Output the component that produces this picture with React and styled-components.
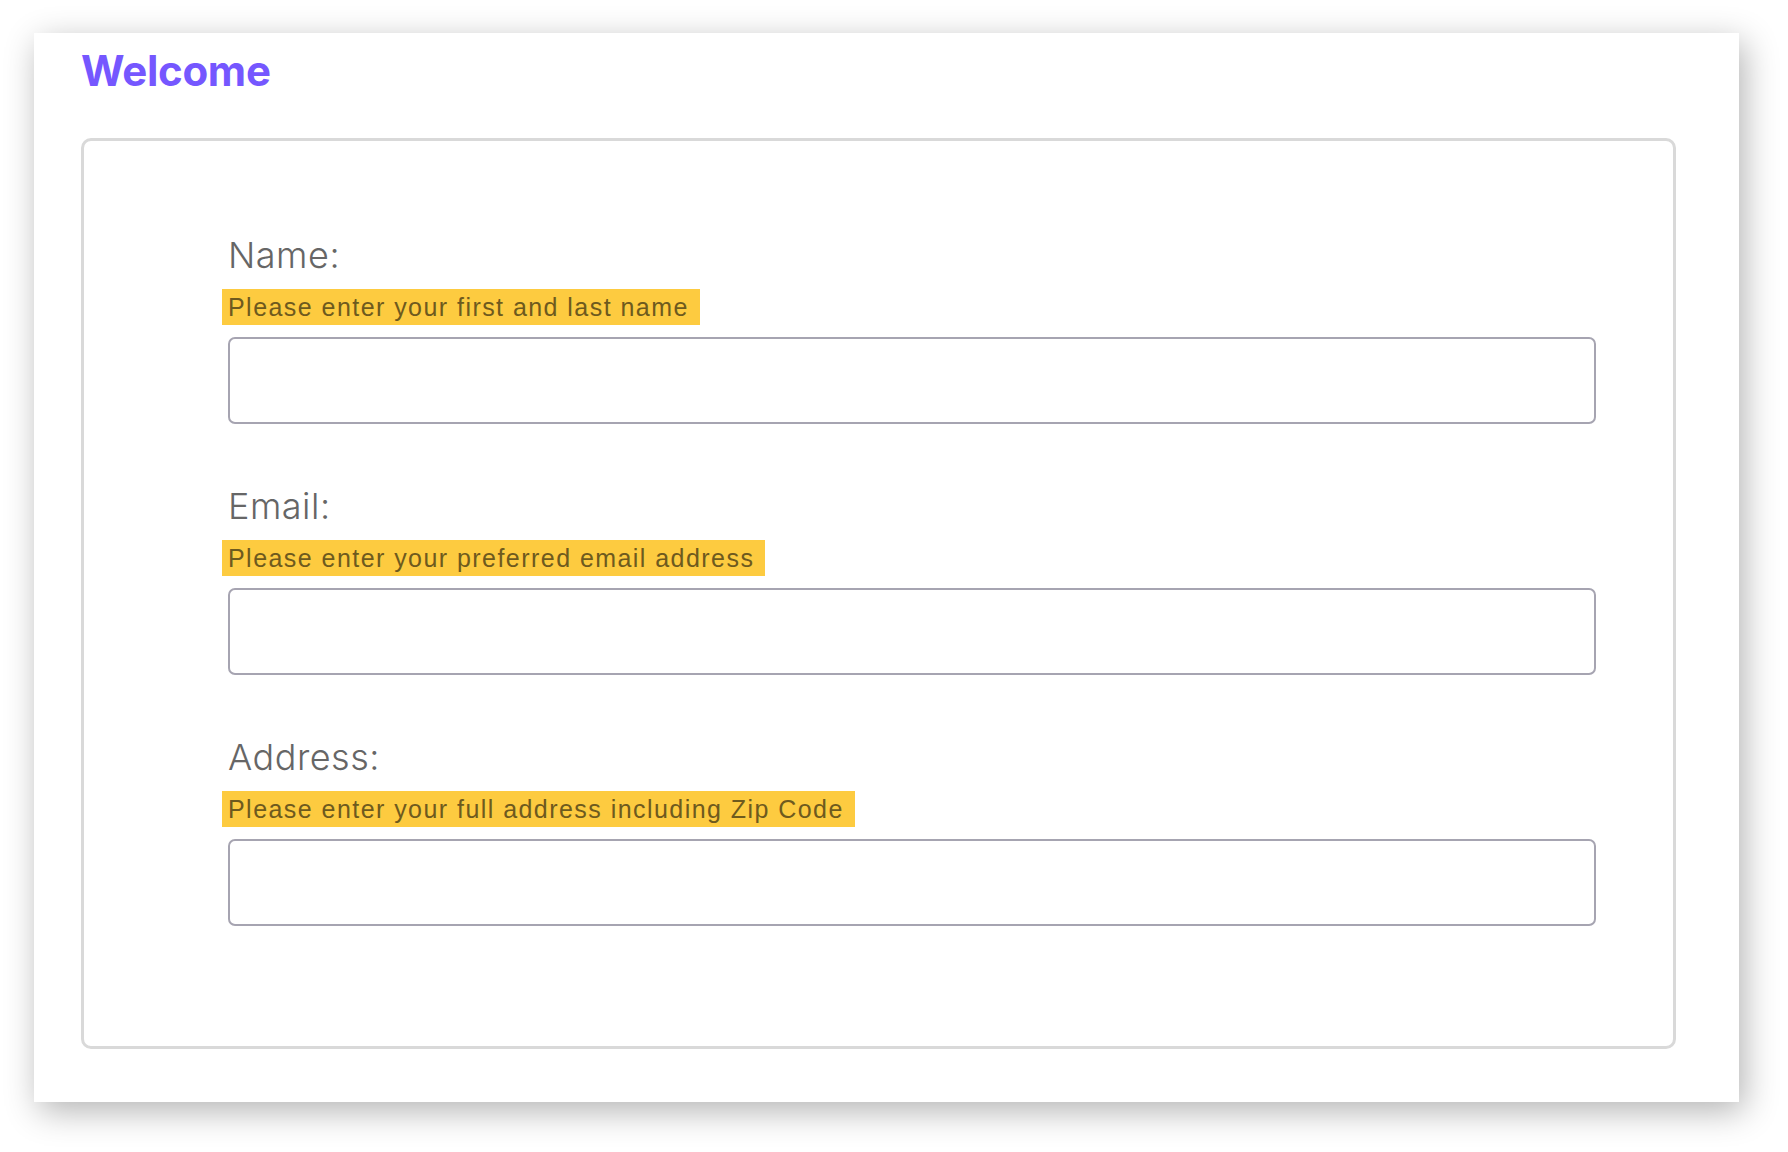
import React from "react"
import styled, { createGlobalStyle } from "styled-components"

const GlobalStyle = createGlobalStyle`
  html, body {
    margin: 0;
    padding: 0;
    background: #ffffff;
  }

  * {
    box-sizing: border-box;
  }
`

const Page = styled.div`
  width: 1788px;
  height: 1152px;
  padding: 33px 0 0 34px;
`

const Card = styled.div`
  width: 1705px;
  height: 1069px;
  background: #ffffff;
  box-shadow: 5px 9px 32px rgba(0, 0, 0, 0.3);
  padding: 13px 63px 0 47px;
  display: flex;
  flex-direction: column;
`

const Title = styled.h1`
  margin: 0 0 42px;
  font-family: "Inter", "Liberation Sans", sans-serif;
  font-weight: 700;
  font-size: 42px;
  line-height: 1.2;
  letter-spacing: -0.3px;
  color: #7557ff;
`

const FormBox = styled.form`
  border: 3px solid #d9d9d9;
  border-radius: 10px;
  padding: 93px 77px 120px 144px;
  display: flex;
  flex-direction: column;
  gap: 61px;
`

const Field = styled.div`
  display: flex;
  flex-direction: column;
  align-items: flex-start;
`

const Label = styled.label`
  font-family: "Inter", "Liberation Sans", sans-serif;
  font-weight: 300;
  font-size: 36px;
  line-height: 43px;
  letter-spacing: 0.5px;
  color: #666666;
  margin-bottom: 12px;
`

const Hint = styled.span`
  display: inline-block;
  margin-left: -6px;
  padding: 4px 11px 4px 6px;
  background: #fdcb40;
  font-family: "Liberation Sans", Arial, sans-serif;
  font-size: 25px;
  line-height: 28px;
  letter-spacing: 1.45px;
  color: #6e5a1e;
  margin-bottom: 12px;
`

const Input = styled.input`
  width: 100%;
  height: 87px;
  border: 2px solid #a6a4b1;
  border-radius: 7px;
  background: #ffffff;
  padding: 0 16px;
  font-family: "Liberation Sans", Arial, sans-serif;
  font-size: 24px;
  outline: none;
`

const fields = [
  { id: "name", label: "Name:", hint: "Please enter your first and last name" },
  { id: "email", label: "Email:", hint: "Please enter your preferred email address" },
  { id: "address", label: "Address:", hint: "Please enter your full address including Zip Code" },
]

const App = () => (
  <>
    <GlobalStyle />
    <Page>
      <Card>
        <Title>Welcome</Title>
        <FormBox onSubmit={(e) => e.preventDefault()}>
          {fields.map((f) => (
            <Field key={f.id}>
              <Label htmlFor={f.id}>{f.label}</Label>
              <Hint>{f.hint}</Hint>
              <Input id={f.id} type="text" />
            </Field>
          ))}
        </FormBox>
      </Card>
    </Page>
  </>
)

export default App
